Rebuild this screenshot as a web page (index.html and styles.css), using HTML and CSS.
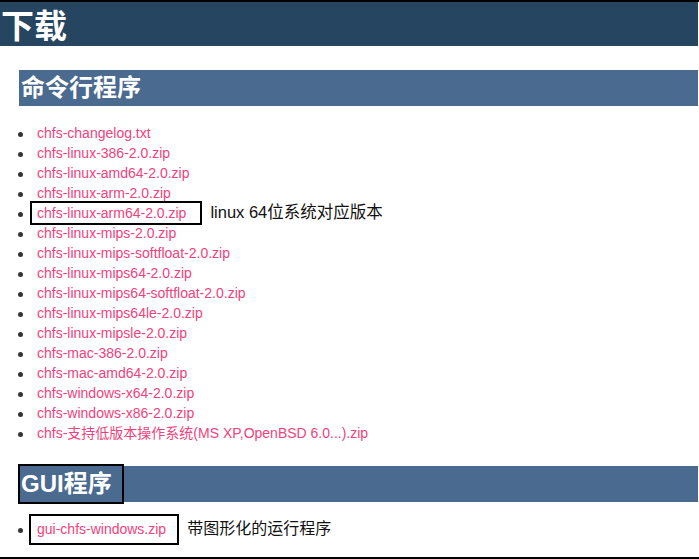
FILE: index.html
```html
<!DOCTYPE html>
<html lang="zh-CN">
<head>
    <meta charset="UTF-8">
    <meta name="viewport" content="width=device-width, initial-scale=1.0">
    <title>下载</title>
    <link rel="stylesheet" href="styles.css">
</head>
<body>
    <div class="page">
        <h1>下载</h1>

        <!-- 命令行版本 -->
        <div class="section">
            <h2>命令行程序</h2>
            <ul class="files">
                <li><a href="#">chfs-changelog.txt</a></li>
                <li><a href="#">chfs-linux-386-2.0.zip</a></li>
                <li><a href="#">chfs-linux-amd64-2.0.zip</a></li>
                <li><a href="#">chfs-linux-arm-2.0.zip</a></li>
                <li><a href="#" class="marked">chfs-linux-arm64-2.0.zip</a><span class="note">linux 64位系统对应版本</span></li>
                <li><a href="#">chfs-linux-mips-2.0.zip</a></li>
                <li><a href="#">chfs-linux-mips-softfloat-2.0.zip</a></li>
                <li><a href="#">chfs-linux-mips64-2.0.zip</a></li>
                <li><a href="#">chfs-linux-mips64-softfloat-2.0.zip</a></li>
                <li><a href="#">chfs-linux-mips64le-2.0.zip</a></li>
                <li><a href="#">chfs-linux-mipsle-2.0.zip</a></li>
                <li><a href="#">chfs-mac-386-2.0.zip</a></li>
                <li><a href="#">chfs-mac-amd64-2.0.zip</a></li>
                <li><a href="#">chfs-windows-x64-2.0.zip</a></li>
                <li><a href="#">chfs-windows-x86-2.0.zip</a></li>
                <li><a href="#">chfs-支持低版本操作系统(MS XP,OpenBSD 6.0...).zip</a></li>
            </ul>
        </div>

        <!-- 图形界面版本 -->
        <div class="section gui">
            <h2><span class="marked-title">GUI程序</span></h2>
            <ul class="files">
                <li><a href="#" class="marked big">gui-chfs-windows.zip</a><span class="note">带图形化的运行程序</span></li>
            </ul>
        </div>
    </div>
</body>
</html>
```

FILE: styles.css
```css
body {
    margin: 0;
    font-family: "Liberation Sans", Arial, "Noto Sans CJK SC", sans-serif;
    background: #fff;
    color: #222;
}

.page {
    height: 559px;
    box-sizing: border-box;
    border-top: 2px solid #000;
    border-bottom: 2px solid #000;
    overflow: hidden;
}

h1 {
    margin: 0 1px 0 0;
    height: 44px;
    line-height: 44px;
    padding-left: 1px;
    background-color: #254560;
    color: #fff;
    font-size: 33px;
    font-weight: bold;
    font-family: "Noto Sans CJK SC", sans-serif;
}

.section {
    margin: 24px 1px 0 19px;
}

.section.gui {
    margin-top: 23px;
}

h2 {
    margin: 0;
    height: 36px;
    line-height: 36px;
    padding-left: 2px;
    background-color: #4b6a8f;
    color: #fff;
    font-size: 24px;
    font-weight: bold;
    font-family: "Liberation Sans", "Noto Sans CJK SC", sans-serif;
}

.files {
    margin: 17px 0 0 0;
    padding-left: 18px;
    list-style: none;
    font-size: 14px;
    line-height: 20px;
}

/* 自绘圆点，位置比默认的 disc 更靠左 */
.files li::before {
    content: "";
    display: inline-block;
    width: 5px;
    height: 5px;
    margin: 0 14px 0 -19px;
    border-radius: 50%;
    background: #333;
    vertical-align: middle;
}

.gui .files {
    margin-top: 12px;
}

.files a {
    color: #f0427c;
    text-decoration: none;
}

.marked {
    border: 2px solid #000;
    padding: 2px 14px 2px 5px;
    margin-left: -7px;
}

.marked.big {
    display: inline-block;
    line-height: 17px;
    padding: 5px 11px 5px 6px;
    margin-left: -8px;
}

.note {
    margin-left: 8px;
    font-size: 16.5px;
    line-height: 16px;
    color: #111;
}

.gui .note {
    font-size: 16px;
}

.marked-title {
    display: inline-block;
    height: 36px;
    margin: -2px 0 -2px -3px;
    padding: 0 10px 0 1px;
    border: 2px solid #000;
    line-height: 36px;
}
```
